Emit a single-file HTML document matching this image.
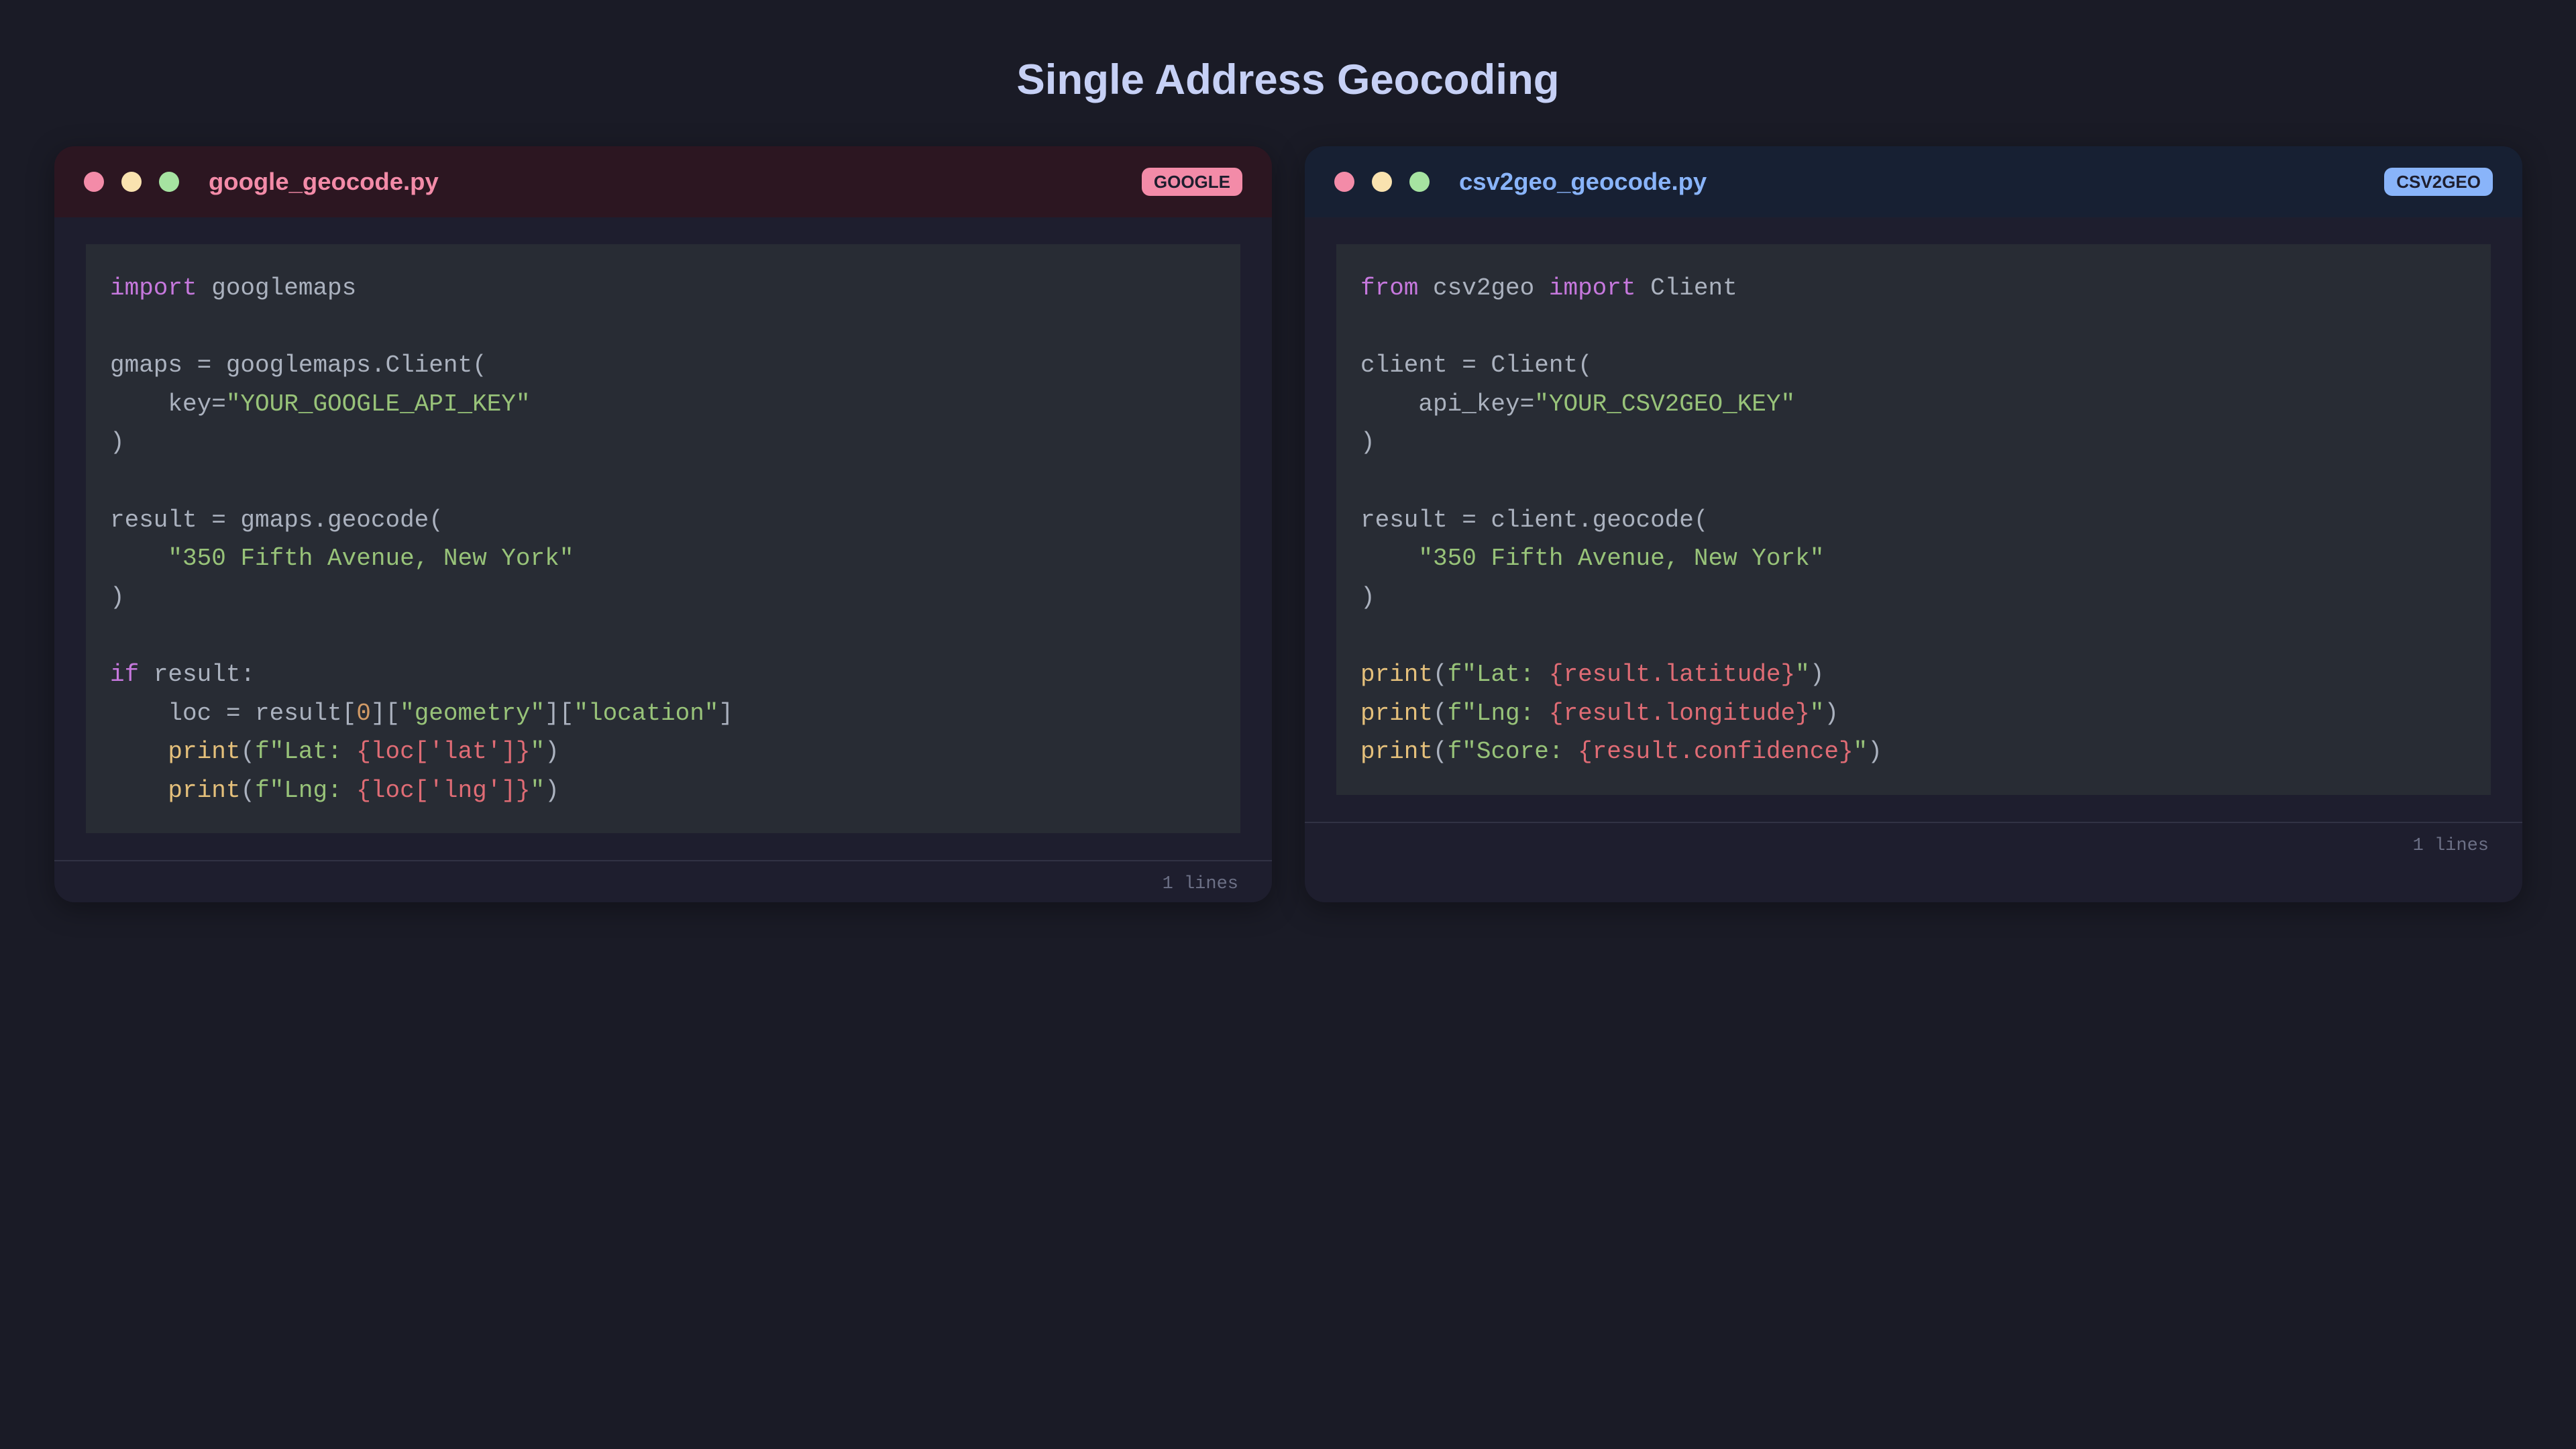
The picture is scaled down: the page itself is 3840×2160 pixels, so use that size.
<!DOCTYPE html>
<html><head><meta charset="utf-8">
<style>
html,body{margin:0;padding:0;}
body{width:3840px;height:2160px;background:#1a1b26;font-family:"Liberation Sans",sans-serif;overflow:hidden;position:relative;}
h1{position:absolute;left:0;right:0;top:79px;margin:0;text-align:center;font-size:63.5px;font-weight:700;color:#c6d0f5;line-height:80px;}
.wrap{position:absolute;left:81px;top:218px;width:3679px;display:flex;gap:49px;align-items:stretch;}
.card{width:1815px;background:#1e1e2e;border-radius:30px;overflow:hidden;box-shadow:0 10px 40px rgba(0,0,0,.35);}
.hdr{height:106px;display:flex;align-items:center;padding:0 44px;box-sizing:border-box;}
.g .hdr{background:#2c1621;}
.c .hdr{background:#172033;}
.dot{width:30px;height:30px;border-radius:50%;margin-right:26px;}
.title{font-size:36.5px;font-weight:700;margin-left:18px;flex:1;}
.g .title{color:#f38ba8}.c .title{color:#89b4fa}
.badge{height:42px;padding:0 18px;border-radius:12px;font-size:26px;font-weight:700;color:#1e1e2e;line-height:42px;}
.g .badge{background:#f38ba8}.c .badge{background:#89b4fa}
.code{margin:40px 47px;background:#282c34;padding:37px 36px 35px;font-family:"Liberation Mono",monospace;font-size:36px;line-height:57.6px;color:#abb2bf;white-space:pre;}
.foot{border-top:2px solid #313244;height:63px;text-align:right;padding-right:50px;box-sizing:border-box;font-family:"Liberation Mono",monospace;font-size:27px;color:#6c7086;line-height:68px;}
.k{color:#c678dd}.s{color:#98c379}.p{color:#e5c07b}.r{color:#e06c75}.n{color:#d19a66}
</style></head><body>
<h1>Single Address Geocoding</h1>
<div class="wrap">
<div class="card g">
<div class="hdr"><div class="dot" style="background:#f38ba8"></div><div class="dot" style="background:#f9e2af"></div><div class="dot" style="background:#a6e3a1"></div><div class="title">google_geocode.py</div><div class="badge">GOOGLE</div></div>
<div class="code"><span class="k">import</span> googlemaps

gmaps = googlemaps.Client(
    key=<span class="s">"YOUR_GOOGLE_API_KEY"</span>
)

result = gmaps.geocode(
    <span class="s">"350 Fifth Avenue, New York"</span>
)

<span class="k">if</span> result:
    loc = result[<span class="n">0</span>][<span class="s">"geometry"</span>][<span class="s">"location"</span>]
    <span class="p">print</span>(<span class="s">f"Lat: </span><span class="r">{loc['lat']}</span><span class="s">"</span>)
    <span class="p">print</span>(<span class="s">f"Lng: </span><span class="r">{loc['lng']}</span><span class="s">"</span>)</div>
<div class="foot">1 lines</div>
</div>
<div class="card c">
<div class="hdr"><div class="dot" style="background:#f38ba8"></div><div class="dot" style="background:#f9e2af"></div><div class="dot" style="background:#a6e3a1"></div><div class="title">csv2geo_geocode.py</div><div class="badge">CSV2GEO</div></div>
<div class="code"><span class="k">from</span> csv2geo <span class="k">import</span> Client

client = Client(
    api_key=<span class="s">"YOUR_CSV2GEO_KEY"</span>
)

result = client.geocode(
    <span class="s">"350 Fifth Avenue, New York"</span>
)

<span class="p">print</span>(<span class="s">f"Lat: </span><span class="r">{result.latitude}</span><span class="s">"</span>)
<span class="p">print</span>(<span class="s">f"Lng: </span><span class="r">{result.longitude}</span><span class="s">"</span>)
<span class="p">print</span>(<span class="s">f"Score: </span><span class="r">{result.confidence}</span><span class="s">"</span>)</div>
<div class="foot">1 lines</div>
</div>
</div>
</body></html>
